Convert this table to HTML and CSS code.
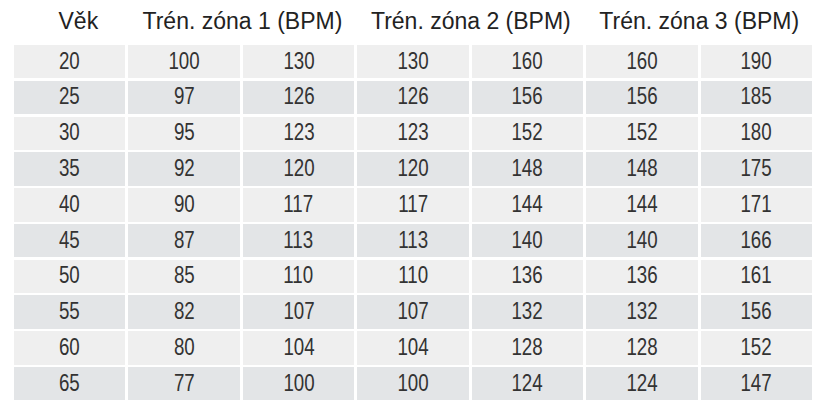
FILE: index.html
```html
<!DOCTYPE html>
<html lang="cs">
<head>
<meta charset="utf-8">
<title>Tréninkové zóny</title>
<link rel="stylesheet" href="styles.css">
</head>
<body>
<div class="zones">
  <div class="head">
    <div class="h h-age">Věk</div>
    <div class="h h-zone">Trén. zóna 1 (BPM)</div>
    <div class="h h-zone">Trén. zóna 2 (BPM)</div>
    <div class="h h-zone">Trén. zóna 3 (BPM)</div>
  </div>
  <div class="body">
    <div class="c odd"><span>20</span></div><div class="c odd"><span>100</span></div><div class="c odd"><span>130</span></div><div class="c odd"><span>130</span></div><div class="c odd"><span>160</span></div><div class="c odd"><span>160</span></div><div class="c odd"><span>190</span></div>
    <div class="c even"><span>25</span></div><div class="c even"><span>97</span></div><div class="c even"><span>126</span></div><div class="c even"><span>126</span></div><div class="c even"><span>156</span></div><div class="c even"><span>156</span></div><div class="c even"><span>185</span></div>
    <div class="c odd"><span>30</span></div><div class="c odd"><span>95</span></div><div class="c odd"><span>123</span></div><div class="c odd"><span>123</span></div><div class="c odd"><span>152</span></div><div class="c odd"><span>152</span></div><div class="c odd"><span>180</span></div>
    <div class="c even"><span>35</span></div><div class="c even"><span>92</span></div><div class="c even"><span>120</span></div><div class="c even"><span>120</span></div><div class="c even"><span>148</span></div><div class="c even"><span>148</span></div><div class="c even"><span>175</span></div>
    <div class="c odd"><span>40</span></div><div class="c odd"><span>90</span></div><div class="c odd"><span>117</span></div><div class="c odd"><span>117</span></div><div class="c odd"><span>144</span></div><div class="c odd"><span>144</span></div><div class="c odd"><span>171</span></div>
    <div class="c even"><span>45</span></div><div class="c even"><span>87</span></div><div class="c even"><span>113</span></div><div class="c even"><span>113</span></div><div class="c even"><span>140</span></div><div class="c even"><span>140</span></div><div class="c even"><span>166</span></div>
    <div class="c odd"><span>50</span></div><div class="c odd"><span>85</span></div><div class="c odd"><span>110</span></div><div class="c odd"><span>110</span></div><div class="c odd"><span>136</span></div><div class="c odd"><span>136</span></div><div class="c odd"><span>161</span></div>
    <div class="c even"><span>55</span></div><div class="c even"><span>82</span></div><div class="c even"><span>107</span></div><div class="c even"><span>107</span></div><div class="c even"><span>132</span></div><div class="c even"><span>132</span></div><div class="c even"><span>156</span></div>
    <div class="c odd"><span>60</span></div><div class="c odd"><span>80</span></div><div class="c odd"><span>104</span></div><div class="c odd"><span>104</span></div><div class="c odd"><span>128</span></div><div class="c odd"><span>128</span></div><div class="c odd"><span>152</span></div>
    <div class="c even"><span>65</span></div><div class="c even"><span>77</span></div><div class="c even"><span>100</span></div><div class="c even"><span>100</span></div><div class="c even"><span>124</span></div><div class="c even"><span>124</span></div><div class="c even"><span>147</span></div>
  </div>
</div>
</body>
</html>
```
FILE: styles.css
```css
html, body {
  margin: 0;
  padding: 0;
  background: #ffffff;
}
body {
  font-family: "Liberation Sans", Arial, sans-serif;
  color: #222222;
}
.zones {
  width: 798px;
  margin-left: 14px;
}
.head {
  display: grid;
  grid-template-columns: 1fr 2fr 2fr 2fr;
  column-gap: 3px;
  height: 45px;
}
.h {
  font-size: 23px;
  line-height: 45px;
  text-align: center;
  white-space: nowrap;
  transform: translateY(-1px);
}
.h-age {
  padding-left: 16px;
}
.body {
  display: grid;
  grid-template-columns: repeat(7, 1fr);
  column-gap: 3px;
  row-gap: 2.4px;
  grid-auto-rows: 33.4px;
}
.c {
  display: flex;
  align-items: center;
  justify-content: center;
  font-size: 24px;
  color: #333333;
}
.c span {
  display: inline-block;
  transform: scaleX(0.78) translateY(-1px);
}
.odd {
  background: #efefef;
}
.even {
  background: #e3e5e7;
}
```
